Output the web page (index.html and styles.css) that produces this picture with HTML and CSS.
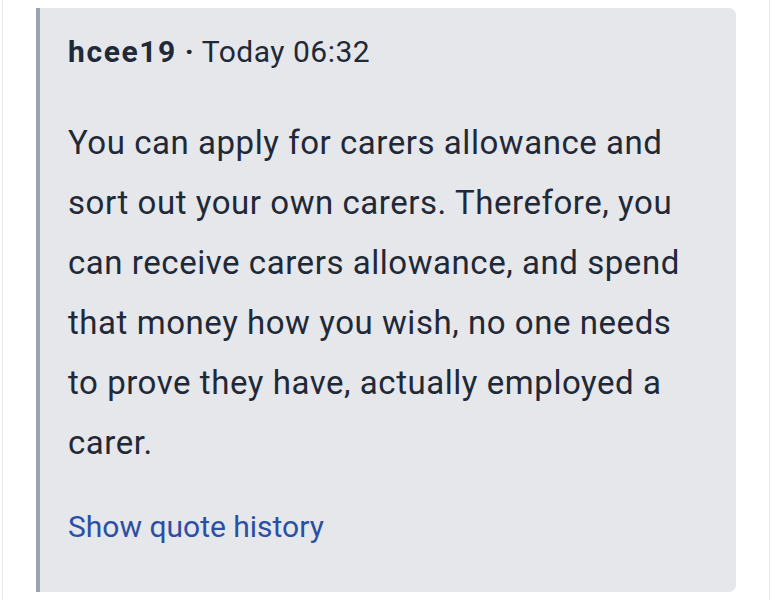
FILE: index.html
```html
<!DOCTYPE html>
<html>
<head>
<meta charset="utf-8">
<link rel="stylesheet" href="styles.css">
</head>
<body>
<div class="page">
  <blockquote class="quote">
    <div class="quote-head"><span class="author">hcee19</span> <span class="dot">·</span> <span class="time">Today 06:32</span></div>
    <p class="quote-body">You can apply for carers allowance and sort out your own carers. Therefore, you can receive carers allowance, and spend that money how you wish, no one needs to prove they have, actually employed a carer.</p>
    <a class="history" href="#">Show quote history</a>
  </blockquote>
</div>
</body>
</html>
```
FILE: styles.css
```css
html, body {
  margin: 0;
  padding: 0;
  background: #ffffff;
}
body {
  font-family: Roboto, "Liberation Sans", sans-serif;
  color: #1f2937;
}
.page {
  margin: 0 2px;
  height: 600px;
  border-left: 1px solid #e8e9ec;
  border-right: 1px solid #e8e9ec;
  padding-top: 8px;
  box-sizing: border-box;
}
.quote {
  margin: 0 0 0 33px;
  width: 700px;
  height: 584px;
  box-sizing: border-box;
  background: #e5e7eb;
  border-left: 4px solid #9ca3af;
  border-radius: 0 7px 7px 0;
  padding: 26px 30px 0 28px;
}
.quote-head {
  font-size: 30px;
  line-height: 36px;
  letter-spacing: 0.5px;
  color: #1f2937;
}
.author {
  font-weight: 700;
  letter-spacing: 1.6px;
}
.dot {
  font-weight: 700;
}
.quote-body {
  margin: 43px 0 0 0;
  font-size: 33px;
  line-height: 60px;
  letter-spacing: 0.55px;
  color: #1f2937;
}
.history {
  display: block;
  margin-top: 24px;
  font-size: 30px;
  line-height: 60px;
  color: #2b4fa5;
  text-decoration: none;
}
```
